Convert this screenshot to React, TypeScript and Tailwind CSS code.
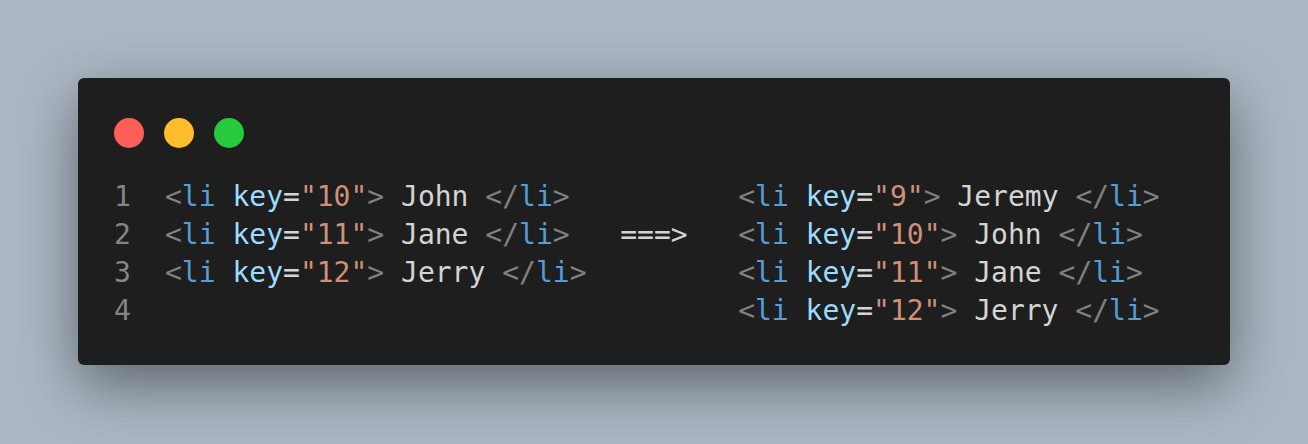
import React from 'react';

type Tok = { t: string; c: string };

const BR = 'text-[#808080]';
const TAG = 'text-[#569cd6]';
const ATTR = 'text-[#9cdcfe]';
const STR = 'text-[#ce9178]';
const TXT = 'text-[#d4d4d4]';

function li(key: string, name: string): Tok[] {
  return [
    { t: '<', c: BR },
    { t: 'li', c: TAG },
    { t: ' ', c: TXT },
    { t: 'key', c: ATTR },
    { t: '=', c: TXT },
    { t: `"${key}"`, c: STR },
    { t: '>', c: BR },
    { t: ` ${name} `, c: TXT },
    { t: '</', c: BR },
    { t: 'li', c: TAG },
    { t: '>', c: BR },
  ];
}

const pad = (n: number): Tok => ({ t: ' '.repeat(n), c: TXT });

const lines: Tok[][] = [
  [...li('10', 'John'), pad(10), ...li('9', 'Jeremy')],
  [...li('11', 'Jane'), pad(3), { t: '===>', c: TXT }, pad(3), ...li('10', 'John')],
  [...li('12', 'Jerry'), pad(9), ...li('11', 'Jane')],
  [pad(34), ...li('12', 'Jerry')],
];

export default function App() {
  return (
    <div className="w-[1308px] h-[444px] bg-[#abb8c3] pt-[78px] px-[78px]">
      <div className="h-[287px] rounded-[6px] bg-[#1e1e1e] shadow-[0_20px_60px_rgba(0,0,0,0.45)] pt-[40px] pl-[35px]">
        <div className="flex gap-[20px] pl-px">
          <span className="w-[30px] h-[30px] rounded-full bg-[#ff5f56]" />
          <span className="w-[30px] h-[30px] rounded-full bg-[#ffbd2e]" />
          <span className="w-[30px] h-[30px] rounded-full bg-[#27c93f]" />
        </div>
        <div className="mt-[30px] font-['DejaVu_Sans_Mono',monospace] text-[28px] leading-[38px] whitespace-pre">
          {lines.map((toks, i) => (
            <div key={i} className="flex">
              <span className="w-[52px] pl-px text-[#858585]">{i + 1}</span>
              <span>
                {toks.map((k, j) => (
                  <span key={j} className={k.c}>
                    {k.t}
                  </span>
                ))}
              </span>
            </div>
          ))}
        </div>
      </div>
    </div>
  );
}
